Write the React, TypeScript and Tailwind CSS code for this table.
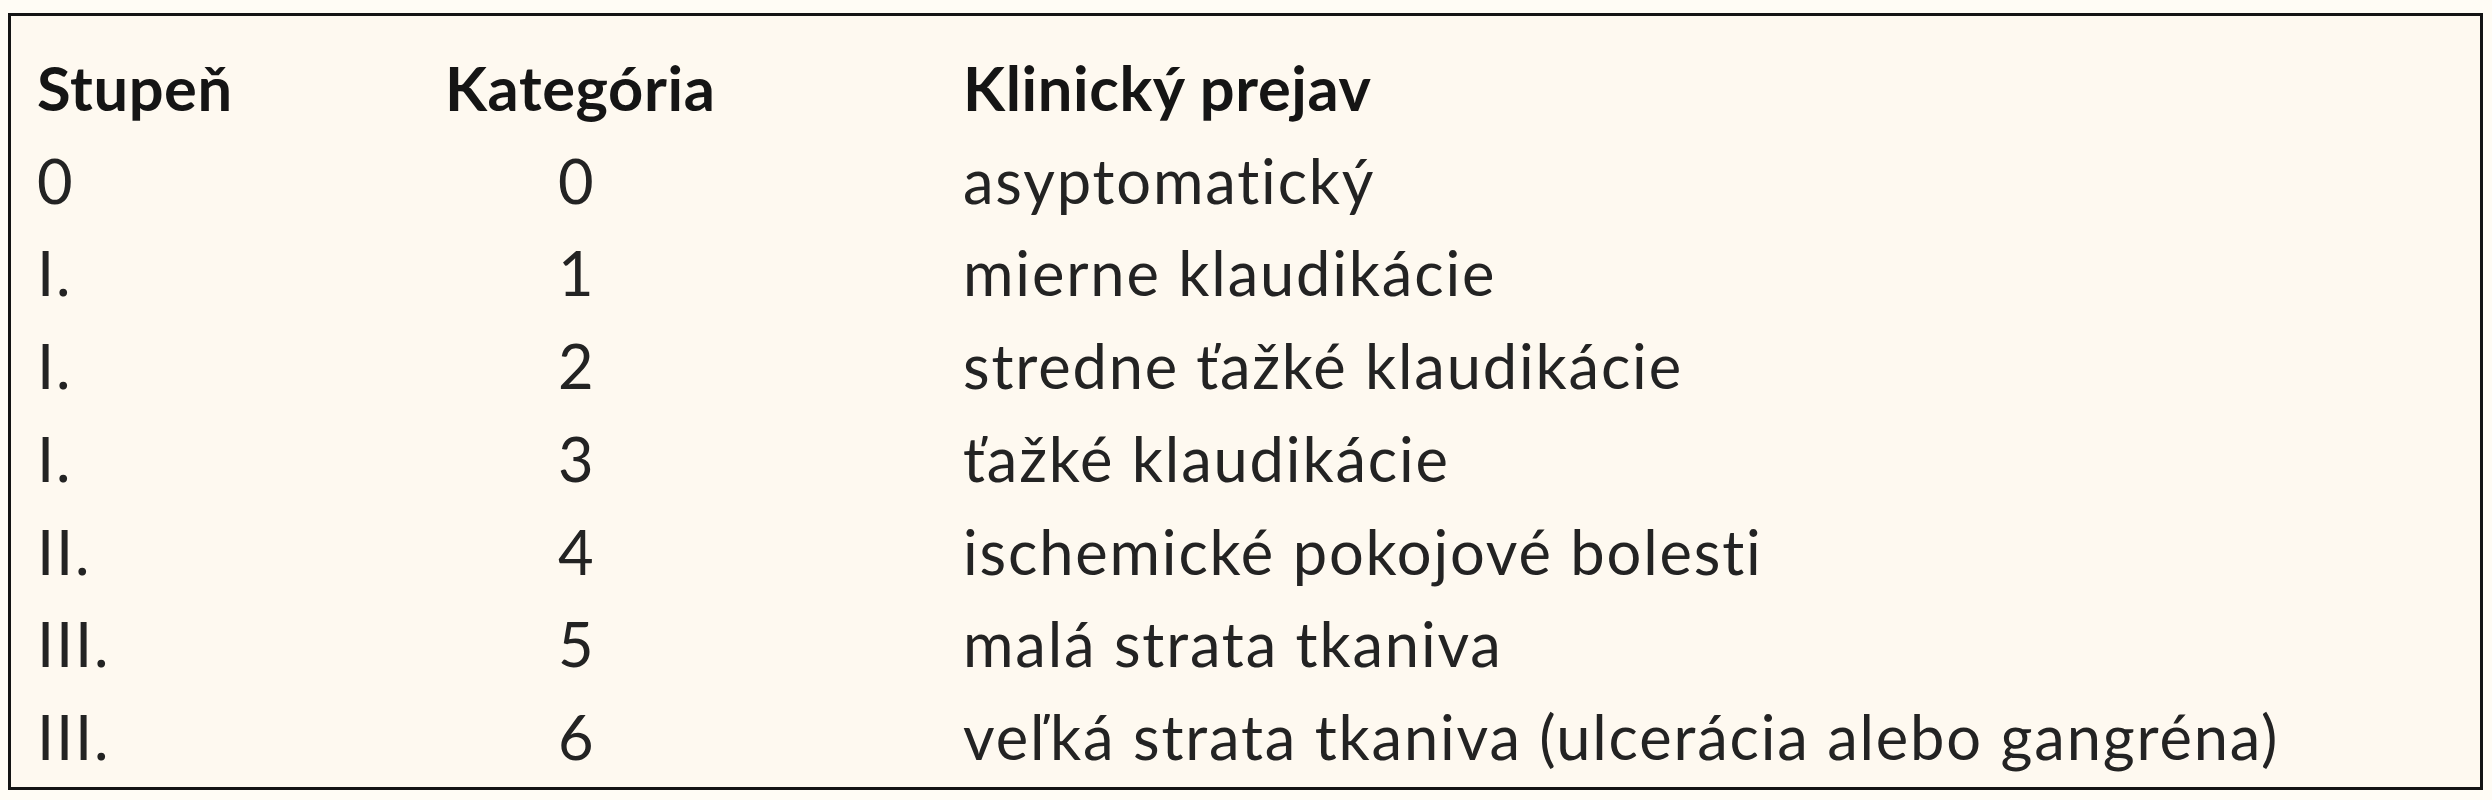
import React from "react";

const rows: [string, string, string][] = [
  ["0", "0", "asyptomatický"],
  ["I.", "1", "mierne klaudikácie"],
  ["I.", "2", "stredne ťažké klaudikácie"],
  ["I.", "3", "ťažké klaudikácie"],
  ["II.", "4", "ischemické pokojové bolesti"],
  ["III.", "5", "malá strata tkaniva"],
  ["III.", "6", "veľká strata tkaniva (ulcerácia alebo gangréna)"],
];

export default function App() {
  return (
    <div className="w-[2492px] h-[800px] bg-[#fffcf5] pt-[13px] pl-[8px] [font-family:Lato,'Open_Sans',sans-serif]">
      <div className="w-[2475px] h-[777px] border-[3px] border-[#141414] bg-[#fef9f0] pt-[25px] pl-[26px] text-[61.4px] leading-[92.7px]">
        <div className="grid grid-cols-[408px_518px_1fr] font-bold text-[#151515] tracking-[0.01em]">
          <div>Stupeň</div>
          <div>Kategória</div>
          <div>Klinický prejav</div>
        </div>
        {rows.map(([a, b, c], i) => (
          <div
            key={i}
            className="grid grid-cols-[408px_518px_1fr] text-[#232323] tracking-[0.03em]"
          >
            <div>{a}</div>
            <div className="pl-[113px]">{b}</div>
            <div>{c}</div>
          </div>
        ))}
      </div>
    </div>
  );
}
